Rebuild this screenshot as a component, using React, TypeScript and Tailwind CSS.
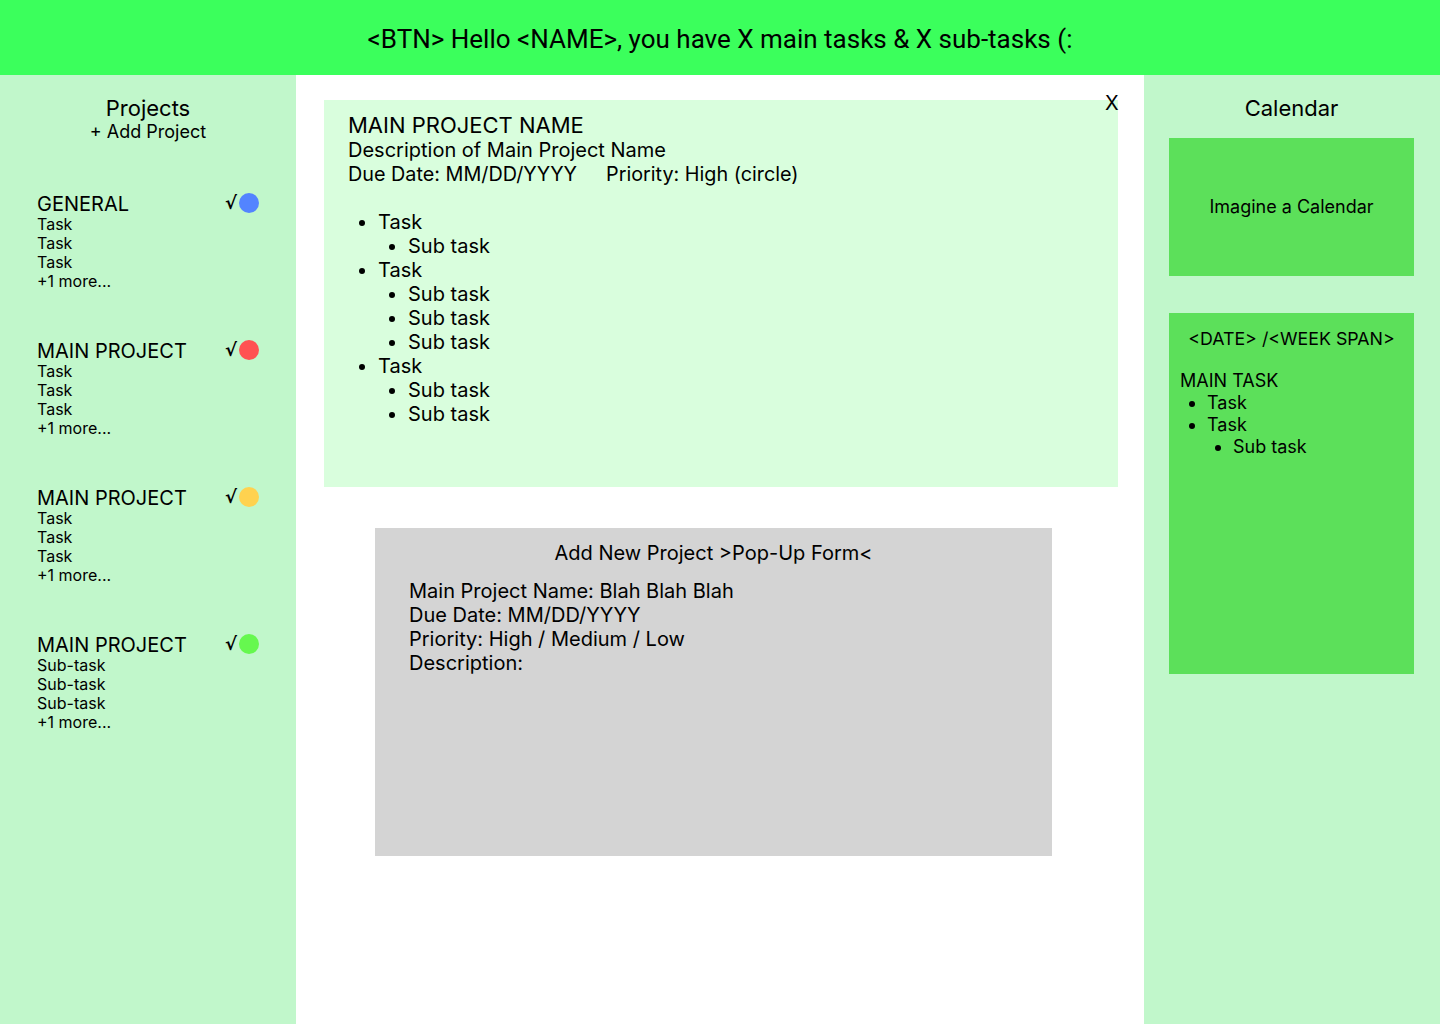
import React from "react";

const projects = [
  { name: "GENERAL", color: "bg-[#5384ff]", items: ["Task", "Task", "Task"] },
  { name: "MAIN PROJECT", color: "bg-[#ff5252]", items: ["Task", "Task", "Task"] },
  { name: "MAIN PROJECT", color: "bg-[#ffd24f]", items: ["Task", "Task", "Task"] },
  { name: "MAIN PROJECT", color: "bg-[#66f84f]", items: ["Sub-task", "Sub-task", "Sub-task"] },
];

const tasks = [
  { t: "Task", subs: ["Sub task"] },
  { t: "Task", subs: ["Sub task", "Sub task", "Sub task"] },
  { t: "Task", subs: ["Sub task", "Sub task"] },
];

export default function App() {
  return (
    <div className="w-[1440px] h-[1024px] flex flex-col text-black font-['Inter',sans-serif] overflow-hidden">
      <header className="h-[75px] bg-[#3bff5c] flex items-center justify-center shrink-0 pt-[4px]">
        <span className="text-[26px] font-['Roboto',sans-serif]">
          &lt;BTN&gt; Hello &lt;NAME&gt;, you have X main tasks &amp; X sub-tasks (:
        </span>
      </header>
      <div className="flex flex-1">
        <aside className="w-[296px] bg-[#c1f7cb] flex flex-col">
          <div className="flex flex-col items-center pt-[20px] leading-none">
            <div className="text-[22px] leading-[26px]">Projects</div>
            <div className="text-[18px] leading-[22px]">+ Add Project</div>
          </div>
          <div className="flex flex-col pl-[37px] pr-[37px] mt-[51px] gap-[50px]">
            {projects.map((p, i) => (
              <div key={i} className="flex flex-col">
                <div className="flex items-center justify-between h-[21px]">
                  <span className="text-[20px] leading-[21px]">{p.name}</span>
                  <span className="flex items-center gap-[2px] mt-[-4px]">
                    <span className="text-[18px] font-bold font-['DejaVu_Sans',sans-serif]">√</span>
                    <span className={`w-[20px] h-[20px] rounded-full ${p.color}`} />
                  </span>
                </div>
                <div className="flex flex-col text-[16px] leading-[19px]">
                  {p.items.map((it, j) => (
                    <span key={j}>{it}</span>
                  ))}
                  <span>+1 more...</span>
                </div>
              </div>
            ))}
          </div>
        </aside>
        <main className="w-[848px] bg-white flex flex-col items-start pl-[28px] pt-[25px] relative">
          <span className="absolute left-[809px] top-[13px] text-[20px]">X</span>
          <section className="w-[794px] h-[387px] bg-[#d9fedd] pl-[24px] pt-[12px]">
            <div className="text-[22px] leading-[26px]">MAIN PROJECT NAME</div>
            <div className="text-[20px] leading-[24px]">Description of Main Project Name</div>
            <div className="text-[19.8px] leading-[24px] flex gap-[29px]">
              <span>Due Date: MM/DD/YYYY</span>
              <span>Priority: High (circle)</span>
            </div>
            <ul className="mt-[24px] text-[20px] leading-[24px] list-disc pl-[30px]">
              {tasks.map((t, i) => (
                <li key={i}>
                  {t.t}
                  <ul className="list-disc pl-[30px]">
                    {t.subs.map((s, j) => (
                      <li key={j}>{s}</li>
                    ))}
                  </ul>
                </li>
              ))}
            </ul>
          </section>
          <section className="ml-[51px] mt-[41px] w-[677px] h-[328px] bg-[#d4d4d4] flex flex-col">
            <div className="text-center text-[20px] leading-[24px] pt-[13px]">Add New Project &gt;Pop-Up Form&lt;</div>
            <div className="pl-[34px] mt-[14px] text-[20px] leading-[24px] flex flex-col">
              <span>Main Project Name: Blah Blah Blah</span>
              <span>Due Date: MM/DD/YYYY</span>
              <span>Priority: High / Medium / Low</span>
              <span>Description:</span>
            </div>
          </section>
        </main>
        <aside className="w-[296px] bg-[#c1f7cb] flex flex-col items-start pl-[25px] pt-[20px]">
          <div className="text-[22px] leading-[26px] w-[245px] text-center">Calendar</div>
          <div className="mt-[17px] w-[245px] h-[138px] bg-[#5ce05a] flex items-center justify-center text-[18px] pb-[1px]">
            Imagine a Calendar
          </div>
          <div className="mt-[37px] w-[245px] h-[361px] bg-[#5ce05a] flex flex-col pt-[15px] pl-[11px]">
            <div className="text-[17.8px] leading-[22px] text-center pr-[11px]">&lt;DATE&gt; /&lt;WEEK SPAN&gt;</div>
            <div className="mt-[20px] text-[18px] leading-[22px]">MAIN TASK</div>
            <ul className="text-[18px] leading-[22px] list-disc pl-[27px]">
              <li>Task</li>
              <li>
                Task
                <ul className="list-disc pl-[26px]">
                  <li>Sub task</li>
                </ul>
              </li>
            </ul>
          </div>
        </aside>
      </div>
    </div>
  );
}
